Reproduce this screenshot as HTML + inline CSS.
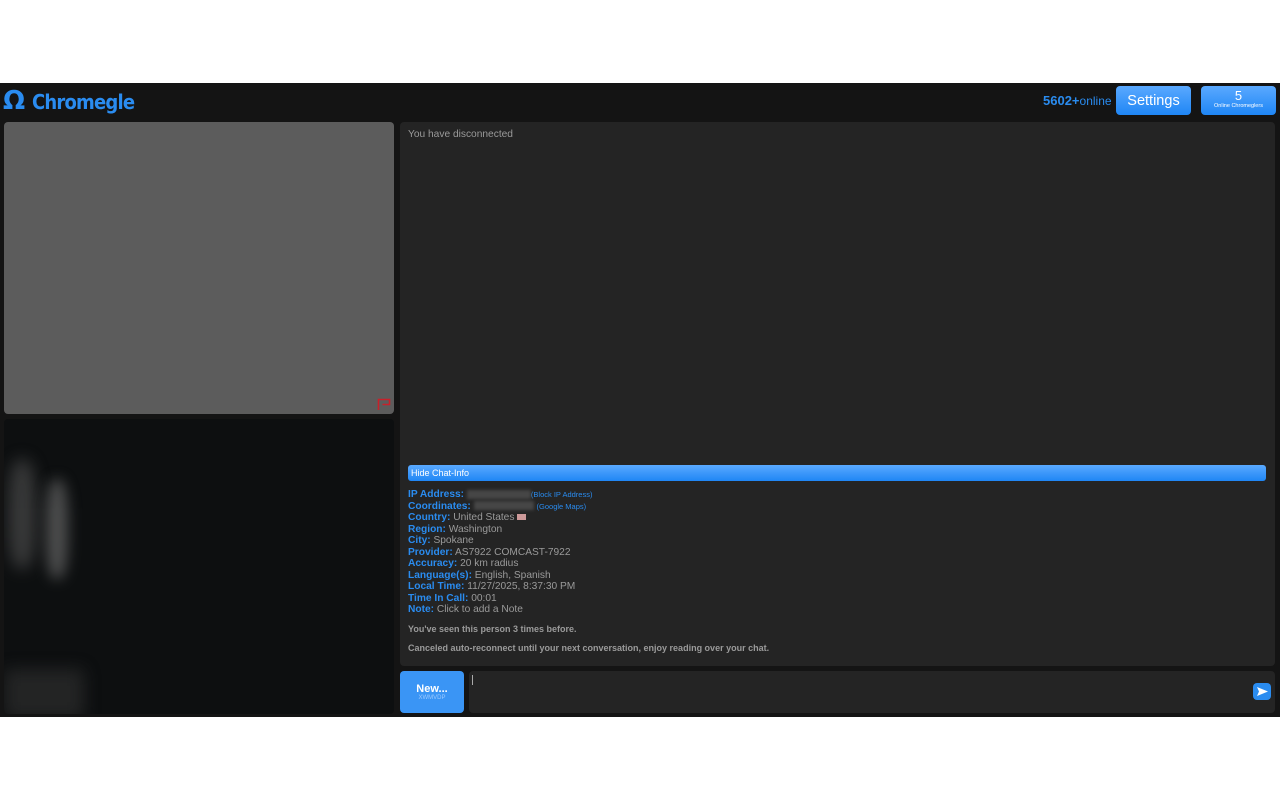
<!DOCTYPE html>
<html><head><meta charset="utf-8"><style>
*{margin:0;padding:0;box-sizing:border-box}
body{width:1280px;height:800px;background:#fff;font-family:"Liberation Sans",sans-serif;position:relative;overflow:hidden}
#app{position:absolute;left:0;top:83px;width:1280px;height:634px;background:#141414}
.abs{position:absolute}
.btn{background:linear-gradient(#5aa9ff,#1f86f5);border-radius:4px;color:#fff;text-align:center}
.info{position:absolute;left:408px;top:489px;font-size:10.2px;line-height:11.5px;color:#9a9a9a}
.info b{color:#2a8cf0;font-weight:bold}
.info small{color:#2a8cf0;font-size:7.5px}
.blur{display:inline-block;height:9px;background:#555;filter:blur(1.5px);vertical-align:middle;opacity:.7}
</style></head><body>
<div id="app">
<div class="abs" style="left:3px;top:3px;font-size:26px;font-weight:bold;color:#2a8cf0;font-family:'DejaVu Sans',sans-serif;line-height:30px">Ω</div>
<div class="abs" style="left:32px;top:5px;font-size:20px;color:#2a8cf0;font-family:'DejaVu Sans Condensed','DejaVu Sans',sans-serif;font-weight:bold;line-height:28px;letter-spacing:-0.8px">Chromegle</div>
<div class="abs" style="left:1043px;top:10px;font-size:13px;font-weight:bold;color:#2a8cf0">5602+<span style="font-weight:normal;font-size:12px">online</span></div>
<div class="abs btn" style="left:1116px;top:3px;width:75px;height:29px;font-size:14.5px;line-height:30px">Settings</div>
<div class="abs btn" style="left:1201px;top:3px;width:75px;height:29px"><div style="font-size:13px;line-height:14px;margin-top:3px">5</div><div style="font-size:5.5px;line-height:7px">Online Chromeglers</div></div>
<div class="abs" style="left:4px;top:39px;width:390px;height:292px;background:#5c5c5c;border-radius:4px">
<svg class="abs" style="left:373px;top:276px" width="14" height="12" viewBox="0 0 14 12"><path d="M1.5 12V1.5h11v5h-7" fill="none" stroke="#c8202a" stroke-width="1.6"/></svg></div>
<div class="abs" style="left:4px;top:336px;width:390px;height:295px;background:#0d0f10;border-radius:4px;overflow:hidden">
<div class="abs" style="left:4px;top:40px;width:28px;height:110px;background:#555;filter:blur(8px);opacity:.6;border-radius:40%"></div>
<div class="abs" style="left:42px;top:60px;width:22px;height:100px;background:#777;filter:blur(7px);opacity:.6;border-radius:40%"></div>
<div class="abs" style="left:0px;top:250px;width:80px;height:50px;background:#333;filter:blur(8px);opacity:.6"></div>
</div>
<div class="abs" style="left:400px;top:39px;width:875px;height:544px;background:#242424;border-radius:4px">
<div class="abs" style="left:8px;top:7px;font-size:10.2px;color:#9a9a9a">You have disconnected</div>
<div class="abs btn" style="left:8px;top:343px;width:858px;height:16px;font-size:9px;line-height:16px;text-align:left;padding-left:3px;border-radius:3px">Hide Chat-Info</div>
</div>
<div class="abs btn" style="left:400px;top:588px;width:64px;height:42px;background:#3a95f5"><div style="font-size:11px;font-weight:bold;margin-top:12px;line-height:12px">New...</div><div style="font-size:6px;color:#9ccaff;line-height:7px">XWMVDP</div></div>
<div class="abs" style="left:469px;top:588px;width:806px;height:42px;background:#242424;border-radius:4px">
<div class="abs" style="left:3px;top:4px;width:1px;height:10px;background:#aaa"></div>
<div class="abs" style="left:784px;top:12px;width:18px;height:17px;background:#2a8cf0;border-radius:4px"><svg width="18" height="17" viewBox="0 0 18 17"><path d="M4 4l11 4.5L4 13l2-4.5z" fill="#fff"/></svg></div>
</div>
</div>
<div class="info">
<div><b>IP Address:</b> <span class="blur" style="width:64px"></span><small>(Block IP Address)</small></div>
<div><b>Coordinates:</b> <span class="blur" style="width:60px"></span> <small>(Google Maps)</small></div>
<div><b>Country:</b> United States <span style="display:inline-block;width:9px;height:6px;background:#c99"></span></div>
<div><b>Region:</b> Washington</div>
<div><b>City:</b> Spokane</div>
<div><b>Provider:</b> AS7922 COMCAST-7922</div>
<div><b>Accuracy:</b> 20 km radius</div>
<div><b>Language(s):</b> English, Spanish</div>
<div><b>Local Time:</b> 11/27/2025, 8:37:30 PM</div>
<div><b>Time In Call:</b> 00:01</div>
<div><b>Note:</b> Click to add a Note</div>
<div style="font-weight:bold;font-size:9px;margin-top:8px">You've seen this person 3 times before.</div>
<div style="font-weight:bold;font-size:9px;margin-top:8px">Canceled auto-reconnect until your next conversation, enjoy reading over your chat.</div>
</div>
</body></html>
